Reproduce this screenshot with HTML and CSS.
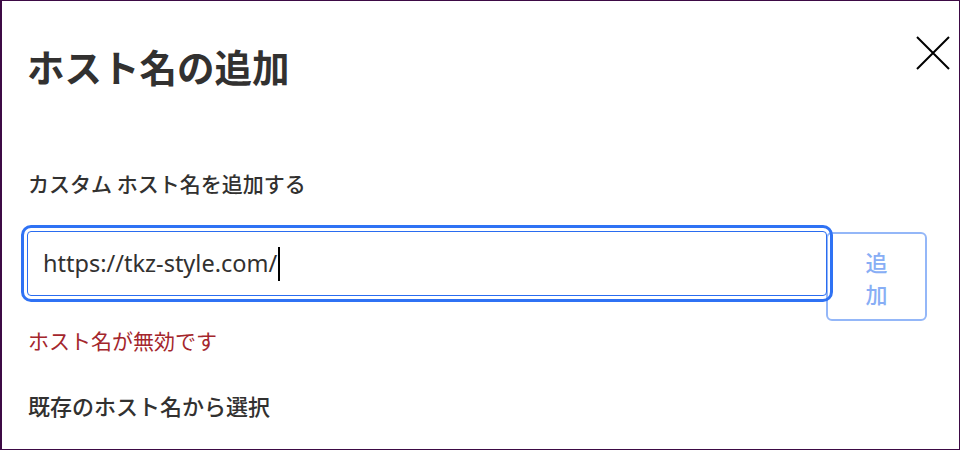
FILE: index.html
```html
<!DOCTYPE html>
<html lang="ja">
<head>
<meta charset="utf-8">
<link rel="stylesheet" href="styles.css">
</head>
<body>
<div class="dialog">
  <div class="header">
    <h1 class="title">ホスト名の追加</h1>
    <button class="close" aria-label="閉じる">
      <svg width="34" height="34" viewBox="0 0 34 34"><path d="M1 1 L33 33 M33 1 L1 33" stroke="#000" stroke-width="2" fill="none"/></svg>
    </button>
  </div>
  <div class="label">カスタム ホスト名を追加する</div>
  <div class="field-row">
    <div class="input">https://tkz-style.com/<span class="caret"></span></div>
    <button class="add"><span>追</span><span>加</span></button>
  </div>
  <div class="error">ホスト名が無効です</div>
  <div class="label second">既存のホスト名から選択</div>
</div>
</body>
</html>
```
FILE: styles.css
```css
* { box-sizing: border-box; }
html, body { margin: 0; padding: 0; background: #fff; }
body { font-family: "Noto Sans CJK JP", "Noto Sans", sans-serif; color: #323130; }
.dialog {
  width: 960px;
  height: 450px;
  border: 1px solid #3d0a45;
  border-left-width: 2px;
  padding: 0 0 0 25px;
  overflow: hidden;
}
.header {
  display: flex;
  justify-content: space-between;
  align-items: flex-start;
  padding-top: 35px;
  padding-right: 9px;
}
.title {
  margin: 0;
  font-size: 37.5px;
  font-weight: 600;
  line-height: 60px;
  padding-left: 0;
}
.close {
  border: 0;
  background: none;
  padding: 0;
  width: 34px;
  height: 34px;
}
.close svg { display: block; }
.label {
  margin-top: 72px;
  font-size: 21px;
  font-weight: 500;
  line-height: 30px;
  padding-left: 1px;
}
.field-row {
  display: flex;
  align-items: flex-start;
  margin-top: 33px;
}
.input {
  width: 800px;
  height: 65px;
  border: 1px solid #2a6cf0;
  border-radius: 4px;
  outline: 3px solid #2f72f4;
  outline-offset: 3px;
  padding-left: 15px;
  font-family: "Noto Sans", "Open Sans", sans-serif;
  font-size: 23.5px;
  line-height: 63px;
  color: #323130;
  position: relative;
  z-index: 1;
  display: flex;
  align-items: center;
}
.caret {
  display: inline-block;
  width: 2px;
  height: 34px;
  background: #000;
  margin-left: 1px;
}
.add {
  margin-left: -1px;
  margin-top: 1px;
  width: 101px;
  height: 89px;
  border: 2px solid #94b7f8;
  border-radius: 6px;
  background: #fff;
  color: #88aef5;
  font-family: "Noto Sans CJK JP", sans-serif;
  font-size: 22px;
  font-weight: 500;
  line-height: 32px;
  display: flex;
  flex-direction: column;
  align-items: center;
  justify-content: center;
  padding: 0;
}
.error {
  margin-top: 4px;
  font-size: 21px;
  line-height: 30px;
  color: #a4262c;
  padding-left: 1px;
}
.label.second { margin-top: 35px; font-size: 22px; }
```
